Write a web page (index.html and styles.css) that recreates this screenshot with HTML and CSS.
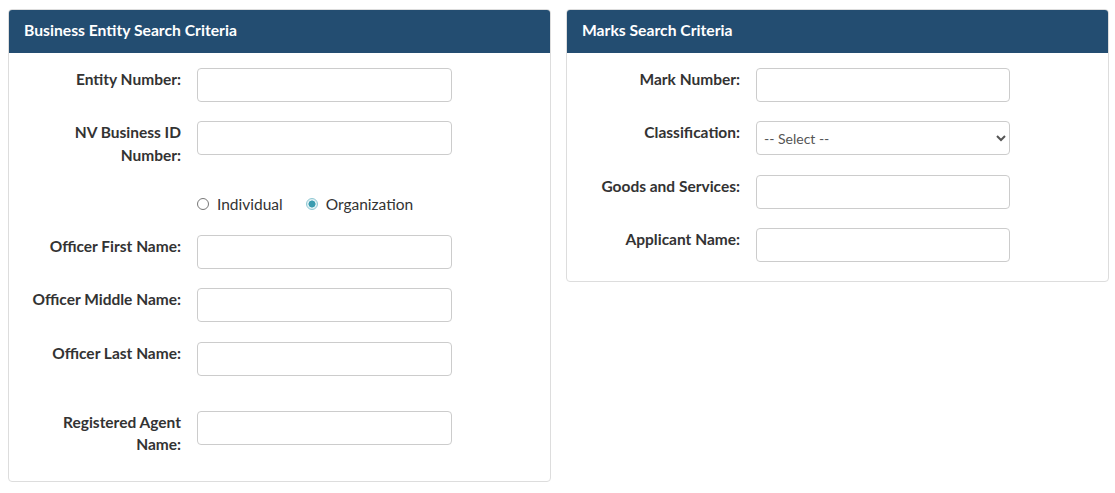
FILE: index.html
```html
<!DOCTYPE html>
<html>
<head>
<meta charset="utf-8">
<link rel="stylesheet" href="styles.css">
</head>
<body>
<div class="page">
  <section class="panel">
    <div class="panel-head">Business Entity Search Criteria</div>
    <div class="panel-body">
      <div class="row"><label class="lbl">Entity Number:</label><input class="field" type="text"></div>
      <div class="row"><label class="lbl">NV Business ID Number:</label><input class="field" type="text"></div>
      <div class="row radios">
        <span class="lbl"></span>
        <div class="radio-group">
          <label class="radio"><input type="radio" name="t"><span>Individual</span></label>
          <label class="radio"><input type="radio" name="t" checked><span>Organization</span></label>
        </div>
      </div>
      <div class="row"><label class="lbl">Officer First Name:</label><input class="field" type="text"></div>
      <div class="row"><label class="lbl">Officer Middle Name:</label><input class="field" type="text"></div>
      <div class="row"><label class="lbl">Officer Last Name:</label><input class="field" type="text"></div>
      <div class="row spaced last"><label class="lbl">Registered Agent Name:</label><input class="field" type="text"></div>
    </div>
  </section>
  <section class="panel marks">
    <div class="panel-head">Marks Search Criteria</div>
    <div class="panel-body">
      <div class="row"><label class="lbl">Mark Number:</label><input class="field" type="text"></div>
      <div class="row"><label class="lbl">Classification:</label>
        <select class="field select"><option>-- Select --</option></select>
      </div>
      <div class="row"><label class="lbl">Goods and Services:</label><input class="field" type="text"></div>
      <div class="row last"><label class="lbl">Applicant Name:</label><input class="field" type="text"></div>
    </div>
  </section>
</div>
</body>
</html>
```
FILE: styles.css
```css
html, body {
  margin: 0;
  padding: 0;
  background: #fff;
}
body {
  font-family: "Lato", "Noto Sans", sans-serif;
  color: #333;
  font-size: 15.5px;
}
.page {
  display: flex;
  align-items: flex-start;
  gap: 15px;
  padding: 9px 6px 0 8px;
}
.panel {
  width: 543px;
  box-sizing: border-box;
  border: 1px solid #ddd;
  border-radius: 4px;
  overflow: hidden;
}
.panel-head {
  background: #234d71;
  color: #fff;
  font-weight: 700;
  font-size: 15.7px;
  height: 43px;
  line-height: 41px;
  padding-left: 15px;
}
.panel-body {
  padding: 15px 0 19px 0;
}
.row {
  display: grid;
  grid-template-columns: 172px 255px;
  column-gap: 16px;
  align-items: start;
  margin-bottom: 19.4px;
}
.marks .row {
  grid-template-columns: 173px 254px;
}
.row.last {
  margin-bottom: 0;
}
.row.spaced {
  margin-top: 35px;
  padding-bottom: 6px;
}
.lbl {
  text-align: right;
  font-weight: 700;
  line-height: 22.5px;
  padding-top: 0;
  padding-left: 20px;
}
.field {
  box-sizing: border-box;
  height: 34px;
  width: 100%;
  border: 1px solid #ccc;
  border-radius: 4px;
  background: #fff;
  margin: 0;
  font-family: inherit;
  font-size: 14px;
  color: #555;
}
.select {
  padding-left: 3px;
}
.row.radios {
  margin-bottom: 13.2px;
  height: 36px;
  align-items: center;
}
.radio-group {
  display: flex;
  gap: 23px;
  align-items: center;
}
.radio {
  display: flex;
  align-items: center;
  gap: 8px;
  font-weight: 400;
  font-size: 15.5px;
  color: #333;
}
.radio input {
  appearance: none;
  -webkit-appearance: none;
  margin: 0;
  width: 12px;
  height: 12px;
  border: 1px solid #777;
  border-radius: 50%;
  box-sizing: border-box;
  background: #fff;
}
.radio input:checked {
  border: 1px solid #8fc8d3;
  background: radial-gradient(circle, #3a9cb0 0 3.2px, #dff0f3 3.8px);
}
```
